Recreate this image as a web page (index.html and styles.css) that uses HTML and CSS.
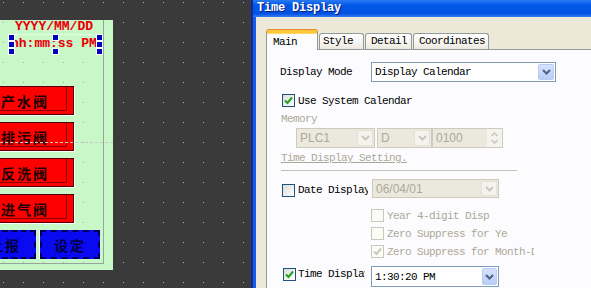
FILE: index.html
```html
<!DOCTYPE html>
<html lang="en">
  <head>
    <title>Time Display</title>
    <link rel="stylesheet" href="styles.css">
  </head>
  <body>
    <div class="screen">
      <!-- HMI editor canvas -->
      <div class="canvas">
        <div class="panel">
          <div class="panel-inner">
            <div class="clock">
              <div class="clock-date">YYYY/MM/DD</div>
              <div class="clock-time">hh:mm:ss PM</div>
            </div>
            <div class="btn red">产水阀</div>
            <div class="btn red">排污阀</div>
            <div class="btn red">反洗阀</div>
            <div class="btn red">进气阀</div>
            <div class="btn-row">
              <div class="btn blue first">上报</div>
              <div class="btn blue second">设定</div>
            </div>
          </div>
        </div>
        <div class="guide"></div>
        <span class="handle hl ht"></span>
        <span class="handle hl hm"></span>
        <span class="handle hl hb"></span>
        <span class="handle hc ht"></span>
        <span class="handle hc hb"></span>
        <span class="handle hr ht"></span>
        <span class="handle hr hm"></span>
        <span class="handle hr hb"></span>
      </div>

      <!-- Properties dialog -->
      <div class="dialog">
        <div class="titlebar">Time Display</div>
        <div class="dlg-body">
          <div class="tabs">
            <div class="tab active">Main</div>
            <div class="tab t-style">Style</div>
            <div class="tab t-detail">Detail</div>
            <div class="tab t-coord">Coordinates</div>
          </div>
          <div class="tabpanel">
            <div class="row r-mode">
              <span class="lbl-mode">Display Mode</span>
              <div class="combo c-mode">
                <span>Display Calendar</span>
                <span class="drop">
                  <svg width="9" height="6" viewBox="0 0 9 6"><polyline points="1,1 4.5,4.5 8,1" fill="none" stroke="#4d6185" stroke-width="2"/></svg>
                </span>
              </div>
            </div>

            <div class="row r-sys">
              <span class="check on">
                <svg width="9" height="9" viewBox="0 0 9 9"><polyline points="1,4.5 3.5,7 8,1.5" fill="none" stroke="#21a121" stroke-width="2"/></svg>
              </span>
              <span class="check-lbl">Use System Calendar</span>
            </div>

            <div class="row r-mem muted">Memory</div>

            <div class="row r-addr">
              <div class="combo off c-plc">
                <span class="sans">PLC1</span>
                <span class="drop off">
                  <svg width="9" height="6" viewBox="0 0 9 6"><polyline points="1,1 4.5,4.5 8,1" fill="none" stroke="#c9c7ba" stroke-width="2"/></svg>
                </span>
              </div>
              <div class="combo off c-dev">
                <span class="sans">D</span>
                <span class="drop off">
                  <svg width="9" height="6" viewBox="0 0 9 6"><polyline points="1,1 4.5,4.5 8,1" fill="none" stroke="#c9c7ba" stroke-width="2"/></svg>
                </span>
              </div>
              <div class="combo off spin">
                <span class="sans">0100</span>
                <span class="spin-btns">
                  <svg width="9" height="14" viewBox="0 0 9 14"><polyline points="1.5,5 4.5,2 7.5,5" fill="none" stroke="#c9c7ba" stroke-width="1.5"/><polyline points="1.5,9 4.5,12 7.5,9" fill="none" stroke="#c9c7ba" stroke-width="1.5"/></svg>
                </span>
              </div>
            </div>

            <div class="row r-link muted">Time Display Setting.</div>

            <div class="row r-sep"></div>

            <div class="row r-date">
              <span class="check"></span>
              <span class="check-lbl clip-date">Date Display</span>
              <div class="combo off c-date">
                <span class="sans">06/04/01</span>
                <span class="drop off">
                  <svg width="9" height="6" viewBox="0 0 9 6"><polyline points="1,1 4.5,4.5 8,1" fill="none" stroke="#c9c7ba" stroke-width="2"/></svg>
                </span>
              </div>
            </div>

            <div class="row r-sub first-sub">
              <span class="check off"></span>
              <span class="check-lbl muted clip-year">Year 4-digit Display</span>
            </div>
            <div class="row r-sub">
              <span class="check off"></span>
              <span class="check-lbl muted clip-ye">Zero Suppress for Year</span>
            </div>
            <div class="row r-sub">
              <span class="check off">
                <svg width="9" height="9" viewBox="0 0 9 9"><polyline points="1,4.5 3.5,7 8,1.5" fill="none" stroke="#cac8bb" stroke-width="2"/></svg>
              </span>
              <span class="check-lbl muted clip-month">Zero Suppress for Month-Day</span>
            </div>

            <div class="row r-time">
              <span class="check on">
                <svg width="9" height="9" viewBox="0 0 9 9"><polyline points="1,4.5 3.5,7 8,1.5" fill="none" stroke="#21a121" stroke-width="2"/></svg>
              </span>
              <span class="check-lbl clip-time">Time Display</span>
              <div class="combo c-time">
                <span>1:30:20 PM</span>
                <span class="drop">
                  <svg width="9" height="6" viewBox="0 0 9 6"><polyline points="1,1 4.5,4.5 8,1" fill="none" stroke="#4d6185" stroke-width="2"/></svg>
                </span>
              </div>
            </div>
          </div>
        </div>
      </div>
    </div>
  </body>
</html>
```

FILE: styles.css
```css
body {
  margin: 0;
  width: 591px;
  height: 288px;
  overflow: hidden;
}

.screen {
  display: flex;
  height: 288px;
}

/* editor canvas with dot grid */
.canvas {
  position: relative;
  width: 251px;
  flex: none;
  background-color: #3a3a3a;
  background-image: linear-gradient(to right, transparent 1px, #3a3a3a 1px), linear-gradient(#b4b4b4 1px, #3a3a3a 1px);
  background-size: 20px 20px;
  background-position: 3px 2px;
  overflow: hidden;
}

.panel {
  margin-top: 20px;
  width: 113px;
  height: 250px;
  background-color: #c8f8c8;
  background-image: linear-gradient(to right, transparent 1px, #c8f8c8 1px), linear-gradient(#98b098 1px, #c8f8c8 1px);
  background-size: 20px 20px;
  background-position: 3px 2px;
}

.panel-inner {
  width: 103px;
  height: 243px;
  border-right: 1px solid #9aa49a;
  border-bottom: 1px solid #9aa49a;
}

.clock {
  height: 66px;
  font-family: "Liberation Mono", monospace;
  font-size: 13px;
  font-weight: bold;
  line-height: 14px;
  color: #e00000;
  text-shadow: 0 0 1px #ffd0d0;
}

.clock-date {
  margin-top: 2px;
  margin-left: 15px;
  width: 78px;
  border-bottom: 1px dotted #ffffff;
}

.clock-time {
  margin-top: 2px;
  padding-left: 11px;
  white-space: nowrap;
}

.btn {
  box-sizing: border-box;
  height: 29px;
  display: flex;
  align-items: center;
  justify-content: center;
  font-family: "Noto Sans CJK SC", sans-serif;
  font-size: 14px;
  font-weight: bold;
  letter-spacing: 2px;
  color: #1a0000;
}

.red {
  margin-left: -18px;
  width: 92px;
  margin-bottom: 7px;
  padding-right: 6px;
  background: #ff0000;
  border: 1px solid #500000;
  box-shadow: inset -6px -3px 0 #ff0000, inset -7px -4px 0 #8a0000, 1px 1px 0 #ffffff;
}

.btn-row {
  display: flex;
}

.blue {
  background: #0a0af2;
  border: 2px dashed #00005a;
  color: #00003a;
  box-shadow: -1px 0 0 #ffffff;
}

.blue.first {
  margin-left: -26px;
  width: 62px;
}

.blue.second {
  margin-left: 4px;
  width: 60px;
}

.guide {
  position: absolute;
  left: 0;
  top: 142px;
  width: 113px;
  border-top: 1px dashed #c8c8c8;
}

.handle {
  position: absolute;
  width: 5px;
  height: 5px;
  background: #0000c0;
  outline: 1px solid #ffffff;
}

.hl { left: 9px; }
.hc { left: 53px; }
.hr { left: 97px; }
.ht { top: 35px; }
.hm { top: 42px; }
.hb { top: 49px; }

/* dialog */
.dialog {
  flex: 1;
  display: flex;
  flex-direction: column;
  border-left: 2px solid #0b2aa8;
  font-family: "Liberation Mono", monospace;
  font-size: 11px;
  letter-spacing: -0.6px;
  color: #000000;
}

.titlebar {
  height: 17px;
  padding-left: 4px;
  line-height: 17px;
  background: linear-gradient(#2a7af2, #0058e8 30%, #0052e0 80%, #3a7cf0);
  color: #ffffff;
  font-weight: bold;
  font-size: 12px;
  letter-spacing: -0.2px;
  text-shadow: 1px 1px 0 #0a1a80;
}

.dlg-body {
  flex: 1;
  display: flex;
  flex-direction: column;
  border-left: 3px solid #1c5ae6;
  background: #ece9d8;
  padding-left: 10px;
  padding-top: 13px;
}

.tabs {
  display: flex;
  align-items: flex-end;
  height: 19px;
}

.tab {
  box-sizing: border-box;
  height: 16px;
  margin-left: 1px;
  padding-left: 5px;
  line-height: 15px;
  border: 1px solid #919b9c;
  border-bottom: none;
  border-radius: 3px 3px 0 0;
  background: linear-gradient(#ffffff, #f3f2ec 70%, #e8e6dc);
}

.tab.active {
  position: relative;
  z-index: 1;
  margin-left: 0;
  height: 20px;
  width: 52px;
  margin-bottom: -1px;
  padding-left: 6px;
  line-height: 19px;
  border-top: 3px solid #ffc83c;
  box-shadow: inset 0 1px 0 #ffd86a, 0 -1px 0 #e68b2c;
  background: #fcfcfe;
}

.t-style { width: 45px; padding-left: 3px; }
.t-detail { width: 47px; }
.t-coord { width: 76px; }

.tabpanel {
  flex: 1;
  border-top: 1px solid #919b9c;
  border-left: 1px solid #919b9c;
  background: #fcfcfe;
  padding-left: 13px;
}

.row {
  display: flex;
  align-items: center;
  white-space: nowrap;
}

.muted {
  color: #aca899;
}

.sans {
  font-family: "Liberation Sans", sans-serif;
  font-size: 12px;
  letter-spacing: 0;
  color: #aca899;
}

.r-mode {
  margin-top: 12px;
  height: 20px;
}

.lbl-mode {
  width: 91px;
}

.combo {
  box-sizing: border-box;
  display: flex;
  align-items: center;
  justify-content: space-between;
  padding-left: 3px;
  border: 1px solid #7f9db9;
  background: #ffffff;
}

.combo.off {
  background: #ebe9dd;
  border-color: #cdcbbe;
}

.drop {
  box-sizing: border-box;
  display: flex;
  align-items: center;
  justify-content: center;
  width: 16px;
  height: 16px;
  margin-right: 1px;
  border: 1px solid #b8cbf5;
  border-radius: 2px;
  background: linear-gradient(#d6e2fd, #b9cdf7);
}

.drop.off {
  border-color: #e4e2d8;
  background: #f4f3ee;
}

.c-mode {
  width: 185px;
  height: 20px;
}

.r-sys {
  margin-top: 12px;
  height: 13px;
}

.check {
  box-sizing: border-box;
  display: flex;
  align-items: center;
  justify-content: center;
  width: 13px;
  height: 13px;
  margin-left: 2px;
  border: 1px solid #1c5180;
  background: linear-gradient(135deg, #dcdcd7, #ffffff);
  flex: none;
}

.check.off {
  border-color: #cac8bb;
  background: #fbfbf8;
}

.check-lbl {
  margin-left: 3px;
  overflow: hidden;
}

.r-mem {
  margin-top: 6px;
  margin-left: 1px;
  height: 12px;
}

.r-addr {
  margin-top: 3px;
  margin-left: 16px;
  height: 20px;
}

.c-plc {
  width: 79px;
  height: 20px;
}

.c-dev {
  width: 55px;
  height: 20px;
  margin-left: 2px;
}

.spin {
  width: 71px;
  height: 20px;
  border-color: #a9bcd2;
}

.spin-btns {
  display: flex;
  align-items: center;
  justify-content: center;
  width: 15px;
  height: 18px;
  background: #f4f3ee;
}

.r-link {
  margin-top: 4px;
  margin-left: 1px;
  height: 12px;
  text-decoration: underline;
}

.r-sep {
  margin-top: 6px;
  margin-left: 1px;
  width: 236px;
  height: 1px;
  border-top: 1px solid #c4c2b6;
}

.r-date {
  margin-top: 7px;
  height: 19px;
  align-items: flex-start;
}

.r-date .check {
  margin-top: 5px;
}

.r-date .check-lbl {
  line-height: 23px;
}

.clip-date {
  width: 70px;
}

.c-date {
  margin-left: 4px;
  width: 127px;
  height: 19px;
}

.c-date .drop {
  height: 15px;
}

.r-sub {
  margin-top: 5px;
  margin-left: 89px;
  height: 13px;
}

.r-sub.first-sub {
  margin-top: 11px;
}

.clip-year { width: 103px; }
.clip-ye { width: 121px; }
.clip-month { width: 147px; }

.r-time {
  margin-top: 8px;
  height: 21px;
  align-items: flex-start;
}

.r-time .check {
  margin-top: 2px;
  margin-left: 3px;
}

.r-time .check-lbl {
  margin-left: 2px;
  line-height: 17px;
}

.clip-time {
  width: 67px;
}

.c-time {
  margin-left: 6px;
  width: 128px;
  height: 21px;
}

.c-time .drop {
  width: 15px;
  height: 17px;
}
```
